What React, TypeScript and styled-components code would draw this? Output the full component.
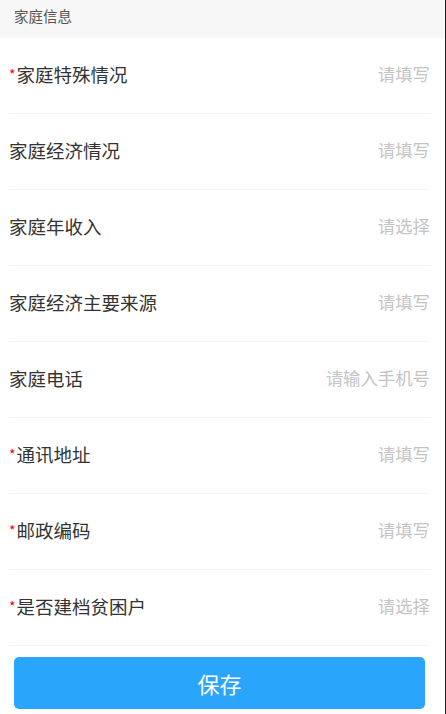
import React from 'react';
import styled, { createGlobalStyle } from 'styled-components';

const GlobalStyle = createGlobalStyle`
  html, body {
    margin: 0;
    padding: 0;
    background: #fff;
    font-family: 'Noto Sans CJK SC', 'Noto Sans', sans-serif;
  }
`;

type Field = {
  label: string;
  placeholder: string;
  required?: boolean;
};

const fields: Field[] = [
  { label: '家庭特殊情况', placeholder: '请填写', required: true },
  { label: '家庭经济情况', placeholder: '请填写' },
  { label: '家庭年收入', placeholder: '请选择' },
  { label: '家庭经济主要来源', placeholder: '请填写' },
  { label: '家庭电话', placeholder: '请输入手机号' },
  { label: '通讯地址', placeholder: '请填写', required: true },
  { label: '邮政编码', placeholder: '请填写', required: true },
  { label: '是否建档贫困户', placeholder: '请选择', required: true },
];

const App: React.FC = () => {
  return (
    <>
      <GlobalStyle />
      <Page>
        <SectionHeader>家庭信息</SectionHeader>
        <FormList>
          {fields.map((item) => (
            <FormRow key={item.label}>
              <Label>
                {item.required && <Star>*</Star>}
                {item.label}
              </Label>
              <Placeholder>{item.placeholder}</Placeholder>
            </FormRow>
          ))}
        </FormList>
        <SaveButton>保存</SaveButton>
      </Page>
    </>
  );
};

export default App;

const Page = styled.div`
  width: 445px;
  height: 714px;
  border-right: 1px solid #1e1e1e;
  display: flex;
  flex-direction: column;
  overflow: hidden;
`;

const SectionHeader = styled.div`
  height: 38px;
  background: #f7f7f7;
  display: flex;
  align-items: center;
  padding-left: 14px;
  padding-bottom: 8px;
  box-sizing: border-box;
  font-size: 14.5px;
  color: #555;
`;

const FormList = styled.div`
  display: flex;
  flex-direction: column;
  padding: 0 15px 0 9px;
`;

const FormRow = styled.div`
  height: 76px;
  padding-bottom: 4px;
  display: flex;
  align-items: center;
  justify-content: space-between;
  border-bottom: 1px solid #f3f3f3;
  box-sizing: border-box;
`;

const Label = styled.div`
  display: flex;
  align-items: center;
  font-size: 18.5px;
  color: #333;
`;

const Star = styled.span`
  color: #f00;
  font-size: 14px;
  margin-right: 1px;
  align-self: center;
`;

const Placeholder = styled.div`
  font-size: 17.4px;
  color: #c4c4c4;
`;

const SaveButton = styled.div`
  margin: 11px 20px 0 14px;
  height: 52px;
  border-radius: 5px;
  background: #29a5fc;
  color: #fff;
  font-size: 22px;
  display: flex;
  align-items: center;
  justify-content: center;
`;
